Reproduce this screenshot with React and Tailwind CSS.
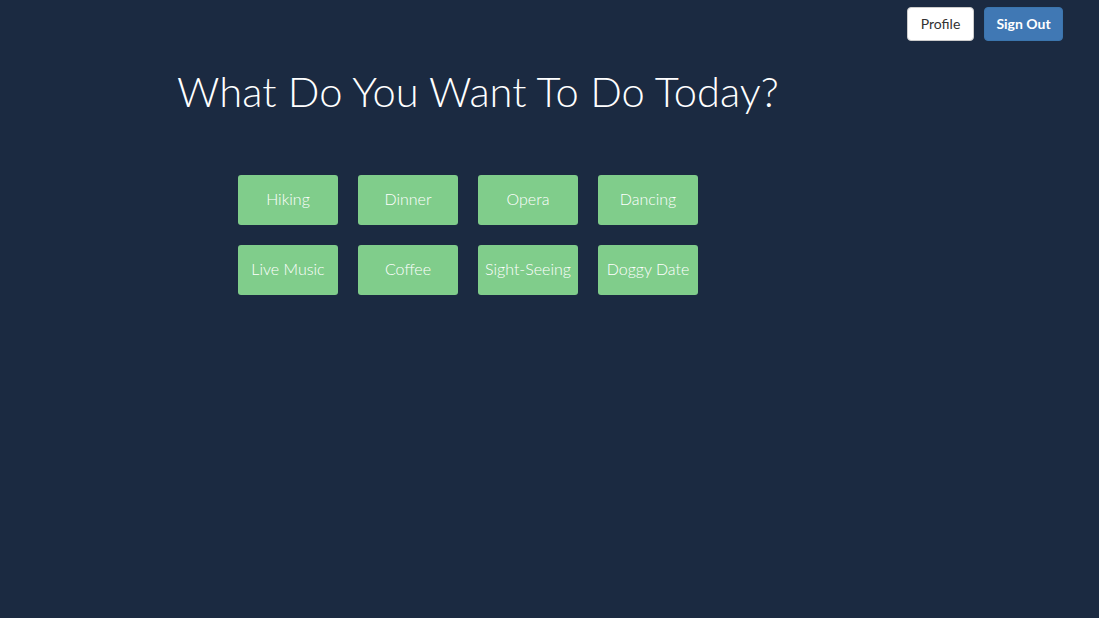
const activities = [
  'Hiking',
  'Dinner',
  'Opera',
  'Dancing',
  'Live Music',
  'Coffee',
  'Sight-Seeing',
  'Doggy Date',
];

export default function App() {
  return (
    <div className="min-h-[618px] w-full bg-[#1b2a41] font-['Lato',sans-serif]">
      <div className="flex justify-end gap-[10px] pr-[36px] pt-[7px]">
        <button className="h-[34px] w-[67px] rounded-[4px] border border-[#cccccc] bg-white pb-[2px] text-[14px] text-[#333333]">
          Profile
        </button>
        <button className="h-[34px] w-[79px] rounded-[4px] border border-[#3b75ad] bg-[#4078b4] pb-[2px] text-[14px] font-bold text-white">
          Sign Out
        </button>
      </div>
      <h1 className="ml-[177px] mt-[28px] text-[41.7px] font-light leading-[1.1] text-white">
        What Do You Want To Do Today?
      </h1>
      <div className="ml-[238px] mt-[60px] grid w-[460px] grid-cols-4 gap-[20px]">
        {activities.map((a) => (
          <button
            key={a}
            className="h-[50px] w-[100px] rounded-[3px] bg-[#80cd8b] pb-[2px] text-[16px] font-light text-white"
          >
            {a}
          </button>
        ))}
      </div>
    </div>
  );
}
